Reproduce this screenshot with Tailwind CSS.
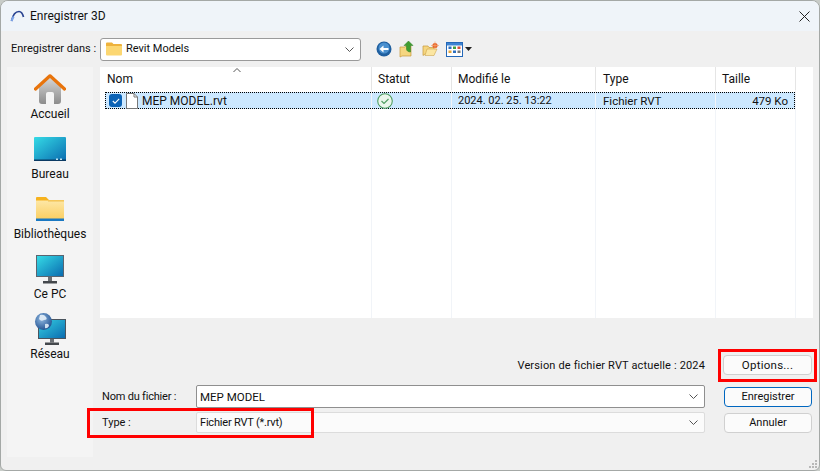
<!DOCTYPE html>
<html lang="fr">
<head>
  <meta charset="UTF-8">
  <title>Enregistrer 3D</title>
  <script src="https://cdn.jsdelivr.net/npm/@tailwindcss/browser@4"></script>
</head>
<body class="bg-[#c8ccc8]">
  <!-- dialog -->
  <div class="relative flex h-[471px] w-[820px] flex-col overflow-hidden rounded-t-[8px] rounded-b-[6px] border border-[#a4a8a6] bg-[#f0f0f0] font-['Roboto',sans-serif] text-[12px] leading-4 text-[#111]">

    <!-- title bar -->
    <div class="flex h-[30px] shrink-0 items-center bg-[#eff4f9] pl-[9px] pr-[9px]">
      <svg class="h-[14px] w-[15px]" viewBox="0 0 15 14" fill="none">
        <path d="M1.5 12 C3 5 6 2.5 9 2.5 C11 2.5 12.5 4 13.5 8" stroke="#27418f" stroke-width="1.7"/>
        <path d="M1.5 12 L3.6 7.5" stroke="#7da4e8" stroke-width="2"/>
      </svg>
      <span class="ml-[5px] text-[12px]">Enregistrer 3D</span>
      <svg class="ml-auto h-[11px] w-[11px]" viewBox="0 0 11 11" stroke="#222" fill="none"><path d="M.5.5l10 10M10.5.5l-10 10"/></svg>
    </div>

    <!-- location bar -->
    <div class="flex h-[36px] shrink-0 items-center">
      <span class="ml-[10px] w-[89px] whitespace-nowrap text-[11px]">Enregistrer dans :</span>
      <div class="flex h-[23px] w-[261px] items-center rounded-[3px] border border-[#9a9a9a] bg-white pl-[5px] pr-[6px]">
        <svg class="h-[14px] w-[16px]" viewBox="0 0 16 14">
          <path d="M0 1.5Q0 .5 1 .5H6L7.5 2H15Q16 2 16 3V5H0Z" fill="#eeb23c"/>
          <path d="M0 4H16V12.5Q16 13.5 15 13.5H1Q0 13.5 0 12.5Z" fill="#fcd772"/>
        </svg>
        <span class="ml-[4px] text-[11px]">Revit Models</span>
        <svg class="ml-auto h-[5px] w-[9px]" viewBox="0 0 9 5" fill="none" stroke="#555"><path d="M.5.5l4 4 4-4"/></svg>
      </div>
      <!-- toolbar icons -->
      <svg class="ml-[15px] h-[16px] w-[16px]" viewBox="0 0 16 16">
        <circle cx="8" cy="8" r="7.5" fill="#1f5f9f"/>
        <circle cx="8" cy="7" r="5.5" fill="#4a90cf"/>
        <path d="M3.5 8L7.5 4.5V7H12.5V9H7.5V11.5Z" fill="#fff"/>
      </svg>
      <svg class="ml-[7px] h-[18px] w-[16px]" viewBox="0 0 16 18">
        <path d="M1 7H6L7 6H12V16H3L1 17Z" fill="#f5d680" stroke="#c79a3a" stroke-width=".7"/>
        <path d="M9.5 1L14 5.5H11.5V12C9.5 12 7.5 11 7.5 9V5.5H5Z" fill="#3f9e2f" stroke="#2a7a20" stroke-width=".5"/>
      </svg>
      <svg class="ml-[7px] h-[16px] w-[17px]" viewBox="0 0 17 16">
        <path d="M1 5H6L7 6.5H12V13H3L1 14.5Z" fill="#f5d680" stroke="#c79a3a" stroke-width=".7"/>
        <path d="M3 14.5L5 8H15L12 14.5Z" fill="#fbe6a2" stroke="#c79a3a" stroke-width=".5"/>
        <circle cx="13" cy="4.5" r="2.6" fill="#e8642a"/>
        <path d="M13 .5V8.500M9 4.500H17" stroke="#f3a56f" stroke-width=".7"/>
      </svg>
      <svg class="ml-[7px] h-[15px] w-[17px]" viewBox="0 0 17 15">
        <rect x=".5" y=".5" width="16" height="14" fill="#fff" stroke="#2468b8"/>
        <rect x="1" y="1" width="15" height="2.500" fill="#3d83d2"/>
        <rect x="2.500" y="4.500" width="3" height="2.500" fill="#2d6fc0"/>
        <rect x="7" y="4.500" width="3" height="2.500" fill="#3f9e3f"/>
        <rect x="11.500" y="4.500" width="3" height="2.500" fill="#d94f3a"/>
        <rect x="2.500" y="8.500" width="3" height="2.500" fill="#e6a53a"/>
        <rect x="7" y="8.500" width="3" height="2.500" fill="#2d6fc0"/>
        <rect x="11.500" y="8.500" width="3" height="2.500" fill="#777"/>
      </svg>
      <svg class="ml-[2px] h-[4px] w-[7px]" viewBox="0 0 7 4"><path d="M0 0H7L3.500 4Z" fill="#222"/></svg>
    </div>

    <div class="flex min-h-0 flex-1 pb-[13px] pl-[6px] pr-[6px]">
      <!-- places sidebar -->
      <div class="w-[86px] shrink-0 bg-[#f4f4f4] pt-[5px]">
        <div class="flex h-[60px] flex-col items-center">
          <div class="flex h-[34px] items-center">
            <svg class="h-[30px] w-[32px]" viewBox="0 0 32 30">
              <defs><linearGradient id="homeBody" x1="0" y1="0" x2="0" y2="1"><stop offset="0" stop-color="#d8d8d8"/><stop offset="1" stop-color="#8c8c8c"/></linearGradient></defs>
              <path d="M5 13L16 3L27 13V27Q27 30 24 30H20V20Q20 18 18 18H14Q12 18 12 20V30H8Q5 30 5 27Z" fill="url(#homeBody)"/>
              <path d="M1.500 15L16 1.800L30.500 15" fill="none" stroke="#e8740c" stroke-width="3.200" stroke-linecap="round" stroke-linejoin="round"/>
            </svg>
          </div>
          <span>Accueil</span>
        </div>
        <div class="flex h-[60px] flex-col items-center">
          <div class="flex h-[34px] items-center">
            <svg class="h-[24px] w-[32px]" viewBox="0 0 32 24">
              <defs><linearGradient id="deskFill" x1="0" y1="0" x2="1" y2="1"><stop offset="0" stop-color="#35dbe6"/><stop offset="1" stop-color="#0a6cb0"/></linearGradient></defs>
              <rect width="32" height="24" rx="1" fill="url(#deskFill)"/>
              <rect y="22.500" width="32" height="1.500" fill="#0b3a63"/>
              <rect x="22" y="21.500" width="2" height="1.500" fill="#bfe4f2"/><rect x="26" y="21.500" width="2" height="1.500" fill="#bfe4f2"/>
            </svg>
          </div>
          <span>Bureau</span>
        </div>
        <div class="flex h-[60px] flex-col items-center">
          <div class="flex h-[34px] items-center">
            <svg class="h-[24px] w-[28px]" viewBox="0 0 28 24">
              <defs><linearGradient id="libFill" x1="0" y1="0" x2="0" y2="1"><stop offset="0" stop-color="#fde7a6"/><stop offset="1" stop-color="#fbcf62"/></linearGradient></defs>
              <path d="M0 1Q0 0 1 0H10L13 3H28V8H0Z" fill="#f6b21e"/>
              <rect y="3.500" width="28" height="18.500" fill="url(#libFill)"/>
              <rect y="3.500" x="12" width="16" height="1" fill="#f0c050"/>
              <rect y="21.500" width="28" height="2.500" fill="#1a78c2"/>
            </svg>
          </div>
          <span>Bibliothèques</span>
        </div>
        <div class="flex h-[60px] flex-col items-center">
          <div class="flex h-[34px] items-center">
            <svg class="h-[29px] w-[28px]" viewBox="0 0 28 29">
              <defs><linearGradient id="pcFill" x1="0" y1="0" x2="1" y2="1"><stop offset="0" stop-color="#35dbe6"/><stop offset="1" stop-color="#0a6cb0"/></linearGradient></defs>
              <rect x="0" y="0" width="28" height="22" fill="#5a6470"/>
              <rect x="1" y="1" width="26" height="20" fill="url(#pcFill)"/>
              <rect x="12" y="22" width="4" height="4" fill="#6b6f73"/>
              <rect x="7" y="26" width="14" height="2.500" fill="#44484c"/>
            </svg>
          </div>
          <span>Ce PC</span>
        </div>
        <div class="flex h-[60px] flex-col items-center">
          <div class="flex h-[34px] items-center">
            <svg class="h-[32px] w-[32px]" viewBox="0 0 32 32">
              <defs>
                <linearGradient id="netFill" x1="0" y1="0" x2="1" y2="1"><stop offset="0" stop-color="#35cfe2"/><stop offset="1" stop-color="#0a6cb0"/></linearGradient>
                <radialGradient id="globeFill" cx=".4" cy=".35" r=".7"><stop offset="0" stop-color="#8fb8e0"/><stop offset="1" stop-color="#1f4f8f"/></radialGradient>
              </defs>
              <rect x="4" y="6" width="28" height="20" fill="#4a545e"/>
              <rect x="5" y="7" width="26" height="18" fill="url(#netFill)"/>
              <rect x="16" y="26" width="4" height="3.500" fill="#6b6f73"/>
              <rect x="11" y="29.500" width="14" height="2.500" fill="#44484c"/>
              <circle cx="9.500" cy="8.500" r="8.500" fill="url(#globeFill)"/>
              <path d="M6 2Q10 1 12 4Q14 7 10 7Q7 9 5 6Z" fill="#dbe8f4"/>
              <path d="M11 11Q15 10 15 13Q13 16 11 15Z" fill="#cfe0f0"/>
            </svg>
          </div>
          <span>Réseau</span>
        </div>
      </div>

      <!-- main -->
      <div class="ml-[7px] flex min-w-0 flex-1 flex-col">
        <!-- file list -->
        <div class="flex h-[251px] w-[713px] shrink-0 bg-white">
          <div class="relative w-[272px] border-r border-[#f1f4f8]">
            <div class="-mr-px h-[23px] border-r border-[#e5e5e5] pl-[7px] pt-[4px]">Nom</div>
            <svg class="absolute left-[133px] top-[1px] h-[4px] w-[8px]" viewBox="0 0 8 4" fill="none" stroke="#555"><path d="M.5 4L4 .5 7.500 4"/></svg>
            <div class="ml-[5px] mt-[2px] flex h-[17px] items-center border border-r-0 border-dotted border-black bg-[#cce8ff] pl-[3px]">
              <span class="flex h-[13px] w-[13px] items-center justify-center rounded-[3px] bg-[#0b63b6]">
                <svg class="h-[6px] w-[8px]" viewBox="0 0 8 6" fill="none" stroke="#fff" stroke-width="1.100"><path d="M.8 3l2.200 2.200L7.200.8"/></svg>
              </span>
              <svg class="ml-[4px] h-[16px] w-[12px]" viewBox="0 0 12 16" fill="#fff" stroke="#777"><path d="M.5.5H8L11.500 4V15.500H.5Z"/><path d="M8 .5V4H11.500" fill="none"/></svg>
              <span class="ml-[4px]">MEP MODEL.rvt</span>
            </div>
          </div>
          <div class="w-[80px] border-r border-[#f1f4f8]">
            <div class="-mr-px h-[23px] border-r border-[#e5e5e5] pl-[6px] pt-[4px]">Statut</div>
            <div class="mt-[2px] flex h-[17px] items-center border-y border-dotted border-black bg-[#cce8ff] pl-[5px]">
              <svg class="h-[16px] w-[16px]" viewBox="0 0 16 16" fill="#eaf6ec"><circle cx="8" cy="8" r="7.300" stroke="#4f9e62" stroke-width="1.100"/><path d="M4.500 8l2.500 2.500 4.500-4.500" fill="none" stroke="#4f9e62" stroke-width="1.200"/></svg>
            </div>
          </div>
          <div class="w-[144px] border-r border-[#f1f4f8]">
            <div class="-mr-px h-[23px] border-r border-[#e5e5e5] pl-[6px] pt-[4px]">Modifié le</div>
            <div class="mt-[2px] flex h-[17px] items-center border-y border-dotted border-black bg-[#cce8ff] pl-[6px] text-[11px]">2024. 02. 25. 13:22</div>
          </div>
          <div class="w-[120px] border-r border-[#f1f4f8]">
            <div class="-mr-px h-[23px] border-r border-[#e5e5e5] pl-[7px] pt-[4px]">Type</div>
            <div class="mt-[2px] flex h-[17px] items-center border-y border-dotted border-black bg-[#cce8ff] pl-[7px] text-[11.5px]">Fichier RVT</div>
          </div>
          <div class="w-[80px] border-r border-[#f1f4f8]">
            <div class="-mr-px h-[23px] border-r border-[#e5e5e5] pl-[6px] pt-[4px]">Taille</div>
            <div class="mt-[2px] flex h-[17px] items-center justify-end border border-l-0 border-dotted border-black bg-[#cce8ff] pr-[6px] text-[11.5px]">479 Ko</div>
          </div>
        </div>

        <!-- version row -->
        <div class="flex h-[67px] w-[713px] shrink-0 items-end">
          <span class="mb-[11px] ml-auto text-[11px] tracking-[.15px]">Version de fichier RVT actuelle : 2024</span>
          <button class="mb-[10px] ml-[18px] mr-[1px] h-[20px] w-[89px] rounded-[4px] border border-[#d0d0d0] bg-[#fbfbfb] text-[11.5px] tracking-[.25px]">Options...</button>
        </div>

        <!-- name and type rows -->
        <div class="flex h-[23px] w-[713px] shrink-0 items-center">
          <span class="ml-[2px] w-[94px] text-[11px] tracking-[-.2px]">Nom du fichier :</span>
          <div class="flex h-[23px] w-[509px] items-center rounded-[2px] border border-[#8f8f8f] bg-white pl-[3px] pr-[6px]">
            <span class="text-[11.5px]">MEP MODEL</span>
            <svg class="ml-auto h-[5px] w-[9px]" viewBox="0 0 9 5" fill="none" stroke="#555"><path d="M.5.5l4 4 4-4"/></svg>
          </div>
          <button class="ml-[19px] h-[20px] w-[88px] rounded-[4px] border border-[#0067c0] bg-[#fbfbfb] text-[11px]">Enregistrer</button>
        </div>
        <div class="mt-[4px] flex h-[21px] w-[713px] shrink-0 items-center">
          <span class="ml-[2px] w-[94px] text-[11px]">Type :</span>
          <div class="flex h-[21px] w-[509px] items-center rounded-[2px] border border-[#dcdcdc] bg-[#fbfbfb] pl-[3px] pr-[6px]">
            <span class="text-[11px] tracking-[-.2px]">Fichier RVT (*.rvt)</span>
            <svg class="ml-auto h-[5px] w-[9px]" viewBox="0 0 9 5" fill="none" stroke="#555"><path d="M.5.5l4 4 4-4"/></svg>
          </div>
          <button class="ml-[19px] h-[20px] w-[88px] rounded-[4px] border border-[#d0d0d0] bg-[#fbfbfb] text-[11px]">Annuler</button>
        </div>
      </div>
    </div>

    <!-- red annotation boxes -->
    <div class="absolute left-[86px] top-[407px] h-[30px] w-[227px] border-[3px] border-[#ff0000]"></div>
    <div class="absolute left-[717px] top-[348px] h-[33px] w-[99px] border-[3px] border-[#ff0000]"></div>

    <!-- resize grip -->
    <svg class="absolute bottom-[1px] right-[1px] h-[10px] w-[10px]" viewBox="0 0 10 10" fill="#b8b8b8">
      <rect x="7" y="1" width="2" height="2"/><rect x="4" y="4" width="2" height="2"/><rect x="7" y="4" width="2" height="2"/>
      <rect x="1" y="7" width="2" height="2"/><rect x="4" y="7" width="2" height="2"/><rect x="7" y="7" width="2" height="2"/>
    </svg>
  </div>
</body>
</html>
